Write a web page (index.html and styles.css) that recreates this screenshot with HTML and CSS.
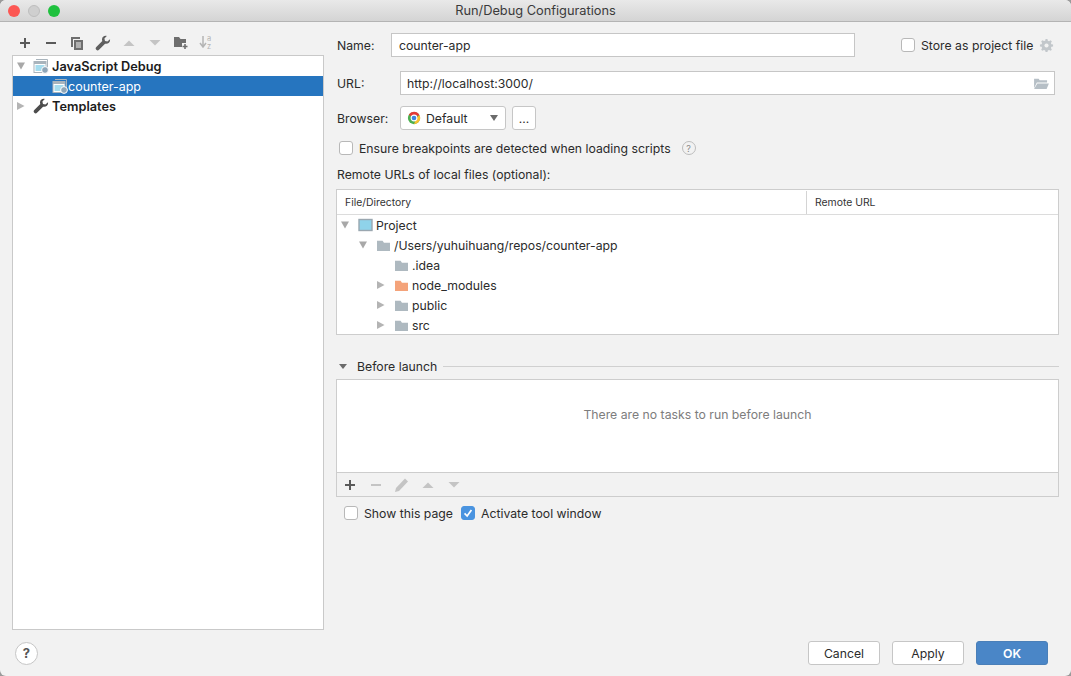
FILE: index.html
```html
<!DOCTYPE html>
<html lang="en">
<head>
<meta charset="utf-8">
<title>Run/Debug Configurations</title>
<link rel="stylesheet" href="styles.css">
</head>
<body>
<svg class="defs" width="0" height="0">
  <defs>
    <symbol id="folder" viewBox="0 0 16 14"><path d="M1 2h6l1.500 2H15v9H1z" fill="currentColor"/></symbol>
    <symbol id="cfg" viewBox="0 0 16 16">
      <path d="M3 1.500h11.500v10" fill="none" stroke="#a9b4bc" stroke-width="1"/>
      <rect x="1" y="3.500" width="12" height="11" fill="#fff" stroke="#a9b4bc"/>
      <rect x="1" y="3.500" width="12" height="2.500" fill="#a9b4bc"/>
      <rect x="2.500" y="7" width="9" height="6" fill="#a5dcee"/>
      <circle cx="12" cy="12" r="3.400" fill="#8fa6b8" stroke="#fff"/>
    </symbol>
    <symbol id="wrench" viewBox="0 0 16 16"><path d="M15 4.200 12.400 6.600 10 6l-.6-2.400L11.800 1C9.600.3 7 1.800 7 4.400c0 .6.100 1 .3 1.500L1.300 12a1.900 1.900 0 0 0 2.700 2.700L10.100 8.700c2.800.8 5.600-1.600 4.900-4.500z" fill="currentColor"/></symbol>
  </defs>
</svg>
<div class="window">
  <header class="titlebar">
    <span class="light red"></span><span class="light gray"></span><span class="light green"></span>
    <span class="title">Run/Debug Configurations</span>
  </header>
  <div class="main">
    <aside class="left">
      <div class="toolbar">
        <svg class="ti" viewBox="0 0 16 16"><path d="M8 3v10M3 8h10" stroke="#5a5a5a" stroke-width="2"/></svg>
        <svg class="ti" viewBox="0 0 16 16"><path d="M3 8h10" stroke="#5a5a5a" stroke-width="2"/></svg>
        <svg class="ti" viewBox="0 0 16 16"><path d="M2 2h9v2H4v8H2z" fill="#6e6e6e"/><path d="M5 5h9v10H5z" fill="#6e6e6e"/><path d="M7 8h5M7 10h5M7 12h5" stroke="#f2f2f2"/></svg>
        <svg class="ti dark"><use href="#wrench"/></svg>
        <svg class="ti" viewBox="0 0 16 16"><path d="M2.500 11 8 5.500 13.500 11z" fill="#c4c4c4"/></svg>
        <svg class="ti" viewBox="0 0 16 16"><path d="M2.500 5 8 10.500 13.500 5z" fill="#c4c4c4"/></svg>
        <svg class="ti" viewBox="0 0 16 16"><path d="M1 2h5l1.500 2H13v4H9v4H1z" fill="#6e6e6e"/><path d="M12 9v5M9.500 11.500h5" stroke="#6e6e6e" stroke-width="1.600"/></svg>
        <span class="sort"><svg class="sortarrow" viewBox="0 0 8 14"><path d="M4 1v10M1 8l3 4 3-4" fill="none" stroke="#b4b4b4" stroke-width="1.500"/></svg><span class="az">a<br>z</span></span>
      </div>
      <div class="tree">
        <div class="row bold"><span class="tri down"></span><svg class="ri"><use href="#cfg"/></svg>JavaScript Debug</div>
        <div class="row selected child"><svg class="ri"><use href="#cfg"/></svg>counter-app</div>
        <div class="row bold"><span class="tri side"></span><svg class="ri wrench"><use href="#wrench"/></svg>Templates</div>
      </div>
    </aside>
    <section class="pane">
      <div class="name-row">
        <label class="lbl name-lbl">Name:</label>
        <div class="input name-input">counter-app</div>
        <span class="box store-box"></span>
        <span class="store-text">Store as project file</span>
        <svg class="gear" viewBox="0 0 16 16"><path d="M7 1h2l.4 1.900 1.300.5L12.400 2.400l1.300 1.300-1 1.700.5 1.300L15 7v2l-1.800.4-.5 1.300 1 1.700-1.300 1.300-1.700-1-1.300.5L9 15H7l-.4-1.800-1.300-.5-1.700 1-1.300-1.300 1-1.700-.5-1.300L1 9V7l1.800-.4.5-1.300-1-1.700 1.300-1.300 1.700 1 1.300-.5z" fill="#c2c7cb"/><circle cx="8" cy="8" r="2.200" fill="#f2f2f2"/></svg>
      </div>
      <div class="url-row">
        <label class="lbl url-lbl">URL:</label>
        <div class="input url-input">http://localhost:3000/
          <svg class="open" viewBox="0 0 16 14"><path d="M0 2h5l1 1.500h8V6H3L0 12z" fill="#b6bfc6"/><path d="M3.500 7H16l-2.500 6H0z" fill="#b6bfc6"/></svg>
        </div>
      </div>
      <div class="browser-row">
        <label class="lbl url-lbl">Browser:</label>
        <div class="combo">
          <svg class="chrome" viewBox="0 0 16 16">
            <circle cx="8" cy="8" r="7" fill="#4caf50"/>
            <path d="M8 1a7 7 0 0 1 6.100 3.500L8 8 2 4.300A7 7 0 0 1 8 1z" fill="#e53935"/>
            <path d="M14.100 4.500A7 7 0 0 1 8 15l3-7z" fill="#fbc02d"/>
            <circle cx="8" cy="8" r="3.300" fill="#3f85e0" stroke="#fff" stroke-width="1.200"/>
          </svg>
          <span>Default</span>
          <span class="caret"></span>
        </div>
        <div class="dots">...</div>
      </div>
      <div class="ensure-row">
        <span class="box"></span>
        <span>Ensure breakpoints are detected when loading scripts</span>
        <span class="qmark">?</span>
      </div>
      <div class="remote-lbl">Remote URLs of local files (optional):</div>
      <div class="table">
        <div class="thead"><div class="th first">File/Directory</div><div class="th">Remote URL</div></div>
        <div class="tbody">
          <div class="trow l0"><span class="tri down"></span><svg class="project" viewBox="0 0 14 14"><rect x=".5" y="1.500" width="13" height="11" fill="#8fd3ea" stroke="#9aa7b0" stroke-width="1.400"/></svg>Project</div>
          <div class="trow l1"><span class="tri down"></span><svg class="fi"><use href="#folder"/></svg>/Users/yuhuihuang/repos/counter-app</div>
          <div class="trow l2"><span class="tri none"></span><svg class="fi"><use href="#folder"/></svg>.idea</div>
          <div class="trow l2"><span class="tri side"></span><svg class="fi orange"><use href="#folder"/></svg>node_modules</div>
          <div class="trow l2"><span class="tri side"></span><svg class="fi"><use href="#folder"/></svg>public</div>
          <div class="trow l2"><span class="tri side"></span><svg class="fi"><use href="#folder"/></svg>src</div>
        </div>
      </div>
      <div class="before-head"><span class="mini-caret"></span><span>Before launch</span><span class="rule"></span></div>
      <div class="before-box">
        <div class="empty">There are no tasks to run before launch</div>
        <div class="btoolbar">
          <svg class="bi" viewBox="0 0 16 16"><path d="M8 3v10M3 8h10" stroke="#5a5a5a" stroke-width="2"/></svg>
          <svg class="bi" viewBox="0 0 16 16"><path d="M3 8h10" stroke="#c4c4c4" stroke-width="2"/></svg>
          <svg class="bi" viewBox="0 0 16 16"><path d="M11 1.500l3 3L5 14l-4 1 1-4z" fill="#c4c4c4"/></svg>
          <svg class="bi" viewBox="0 0 16 16"><path d="M2.500 11 8 5.500 13.500 11z" fill="#c4c4c4"/></svg>
          <svg class="bi" viewBox="0 0 16 16"><path d="M2.500 5 8 10.500 13.500 5z" fill="#c4c4c4"/></svg>
        </div>
      </div>
      <div class="checks">
        <span class="box"></span><span class="show">Show this page</span>
        <span class="box checked"><svg viewBox="0 0 14 14"><path d="M3 7.500 6 10.500 11 3.500" fill="none" stroke="#fff" stroke-width="2"/></svg></span><span>Activate tool window</span>
      </div>
    </section>
  </div>
  <footer class="footer">
    <span class="help">?</span>
    <div class="buttons">
      <div class="btn">Cancel</div>
      <div class="btn">Apply</div>
      <div class="btn ok">OK</div>
    </div>
  </footer>
</div>
</body>
</html>
```
FILE: styles.css
```css
* { box-sizing: border-box; }
html, body { margin: 0; height: 100%; overflow: hidden; }
body { background: #9a9a9a; font-family: Inter, "Liberation Sans", sans-serif; font-size: 12.250px; color: #2b2b2b; }
.defs { display: block; height: 0; }
.window { width: 1071px; height: 676px; background: #f2f2f2; border-radius: 6px; overflow: hidden; display: flex; flex-direction: column; }
.titlebar { height: 22px; flex: none; display: flex; align-items: center; gap: 8px; padding-left: 8px; position: relative; background: linear-gradient(#e9e9e9, #d4d4d4); border-bottom: 1px solid #b4b4b4; }
.light { width: 12px; height: 12px; border-radius: 50%; }
.red { background: #fc5753; }
.gray { background: #cfcfcf; border: 1px solid #bdbdbd; }
.green { background: #1fc13e; }
.title { position: absolute; left: 0; right: 0; text-align: center; font-size: 12.800px; color: #3a3a3a; }
.main { flex: 1; display: flex; min-height: 0; }
.left { width: 336px; padding-left: 12px; flex: none; display: flex; flex-direction: column; }
.toolbar { height: 33px; padding: 13px 0 0 5px; display: flex; gap: 10px; flex: none; align-items: flex-start; }
.ti { width: 16px; height: 16px; flex: none; }
.dark { color: #5f5f5f; }
.sort { width: 16px; height: 16px; display: flex; color: #b4b4b4; }
.sortarrow { width: 8px; height: 14px; }
.az { font-size: 7.500px; line-height: 8px; }
.tree { width: 312px; height: 575px; border: 1px solid #c9c9c9; background: #fff; }
.row { height: 20px; display: flex; align-items: center; font-size: 12.500px; color: #1c1c1c; padding-left: 3px; }
.bold { font-weight: 600; font-size: 12.750px; }
.selected { background: #2675bf; color: #fff; }
.child { padding-left: 39px; }
.ri { width: 16px; height: 16px; margin-right: 3px; flex: none; }
.child .ri { margin-right: 0; }
.row .tri { margin-right: 7px; }
.wrench { color: #4d4d4d; }
.tri { display: inline-block; width: 10px; height: 10px; flex: none; }
.tri.down { background: #a8a8a8; clip-path: polygon(10% 15%, 90% 15%, 50% 85%); }
.tri.side { background: #b4b4b4; clip-path: polygon(10% 10%, 85% 50%, 10% 90%); }
.pane { flex: 1; padding-right: 12px; min-width: 0; }
.lbl { color: #2b2b2b; padding-left: 1px; }
.name-row { display: flex; align-items: center; height: 24px; margin-top: 11px; }
.name-lbl { width: 55px; }
.input { height: 24px; background: #fff; border: 1px solid #c6c6c6; display: flex; align-items: center; padding-left: 6px; color: #2b2b2b; }
.name-input { width: 464px; padding-left: 7px; }
.box { width: 14px; height: 14px; flex: none; border: 1px solid #b8b8b8; border-radius: 3px; background: #fff; display: inline-block; }
.store-box { margin-left: 46px; margin-right: 6px; }
.store-text { white-space: nowrap; }
.gear { width: 15px; height: 15px; margin-left: 6px; flex: none; }
.url-row { display: flex; align-items: center; margin-top: 14px; }
.url-lbl { width: 64px; }
.url-input { width: 655px; position: relative; }
.open { position: absolute; right: 5px; top: 5px; width: 15px; height: 13px; }
.browser-row { display: flex; align-items: center; margin-top: 11px; }
.combo { width: 106px; height: 24px; background: #fff; border: 1px solid #c6c6c6; border-radius: 3px; display: flex; align-items: center; padding-left: 6px; }
.chrome { width: 14px; height: 14px; margin-right: 5px; flex: none; }
.caret { margin-left: auto; margin-right: 7px; border: 4.500px solid transparent; border-top: 6px solid #6b6b6b; border-bottom: 0; }
.dots { width: 24px; height: 24px; margin-left: 6px; background: #fff; border: 1px solid #c6c6c6; border-radius: 3px; display: flex; align-items: center; justify-content: center; font-size: 12px; }
.ensure-row { display: flex; align-items: center; height: 20px; margin-top: 8px; padding-left: 3px; }
.ensure-row .box { margin-right: 6px; }
.qmark { width: 14px; height: 14px; border: 1px solid #bdbdbd; border-radius: 50%; margin-left: 11px; color: #8a8a8a; font-size: 9px; display: flex; align-items: center; justify-content: center; }
.remote-lbl { margin-top: 8px; height: 18px; line-height: 18px; padding-left: 1px; }
.table { margin-top: 5px; width: 723px; height: 146px; background: #fff; border: 1px solid #cdcdcd; overflow: hidden; }
.thead { height: 25px; display: flex; border-bottom: 1px solid #dcdcdc; font-size: 10.400px; color: #333; align-items: center; }
.th { padding-left: 8px; height: 23px; display: flex; align-items: center; }
.th.first { width: 470px; border-right: 1px solid #d4d4d4; }
.trow { height: 20px; display: flex; align-items: center; }
.trow .tri { margin-right: 8px; }
.l0 { padding-left: 3px; }
.l1 { padding-left: 21px; }
.l2 { padding-left: 39px; }
.fi { width: 15px; height: 13px; color: #aeb9c0; margin-right: 3px; flex: none; }
.orange { color: #f4a37a; }
.project { width: 15px; height: 14px; margin-right: 3px; flex: none; }
.before-head { display: flex; align-items: center; gap: 6px; height: 16px; margin-top: 23px; }
.mini-caret { border: 4px solid transparent; border-top: 5px solid #6b6b6b; border-bottom: 0; margin-left: 3px; margin-right: 4px; }
.rule { flex: 1; height: 1px; background: #d0d0d0; }
.before-box { margin-top: 5px; width: 723px; height: 118px; background: #fff; border: 1px solid #cdcdcd; display: flex; flex-direction: column; }
.empty { flex: 1; display: flex; align-items: center; justify-content: center; color: #7d7d7d; padding-bottom: 24px; }
.btoolbar { height: 24px; background: #f2f2f2; border-top: 1px solid #cdcdcd; display: flex; align-items: center; padding-left: 5px; gap: 10px; }
.bi { width: 16px; height: 16px; }
.checks { display: flex; align-items: center; height: 18px; margin-top: 7px; padding-left: 8px; }
.checks .box { margin-right: 6px; }
.show { margin-right: 8px; }
.checked { background: #4a94e0; border-color: #4a94e0; padding: 0; }
.checked svg { display: block; width: 12px; height: 12px; }
.footer { height: 46px; flex: none; display: flex; align-items: flex-start; justify-content: space-between; padding: 11px 23px 0 15px; }
.help { width: 23px; height: 23px; margin-top: 0.500px; border-radius: 50%; background: #fff; border: 1px solid #c6c6c6; color: #555; font-weight: 700; font-size: 13px; display: flex; align-items: center; justify-content: center; }
.buttons { display: flex; gap: 12px; }
.btn { width: 72px; height: 24px; background: #fff; border: 1px solid #c6c6c6; border-radius: 3px; display: flex; align-items: center; justify-content: center; }
.ok { background: #4a86c7; border-color: #4a7fb8; color: #fff; font-weight: 600; }
```
